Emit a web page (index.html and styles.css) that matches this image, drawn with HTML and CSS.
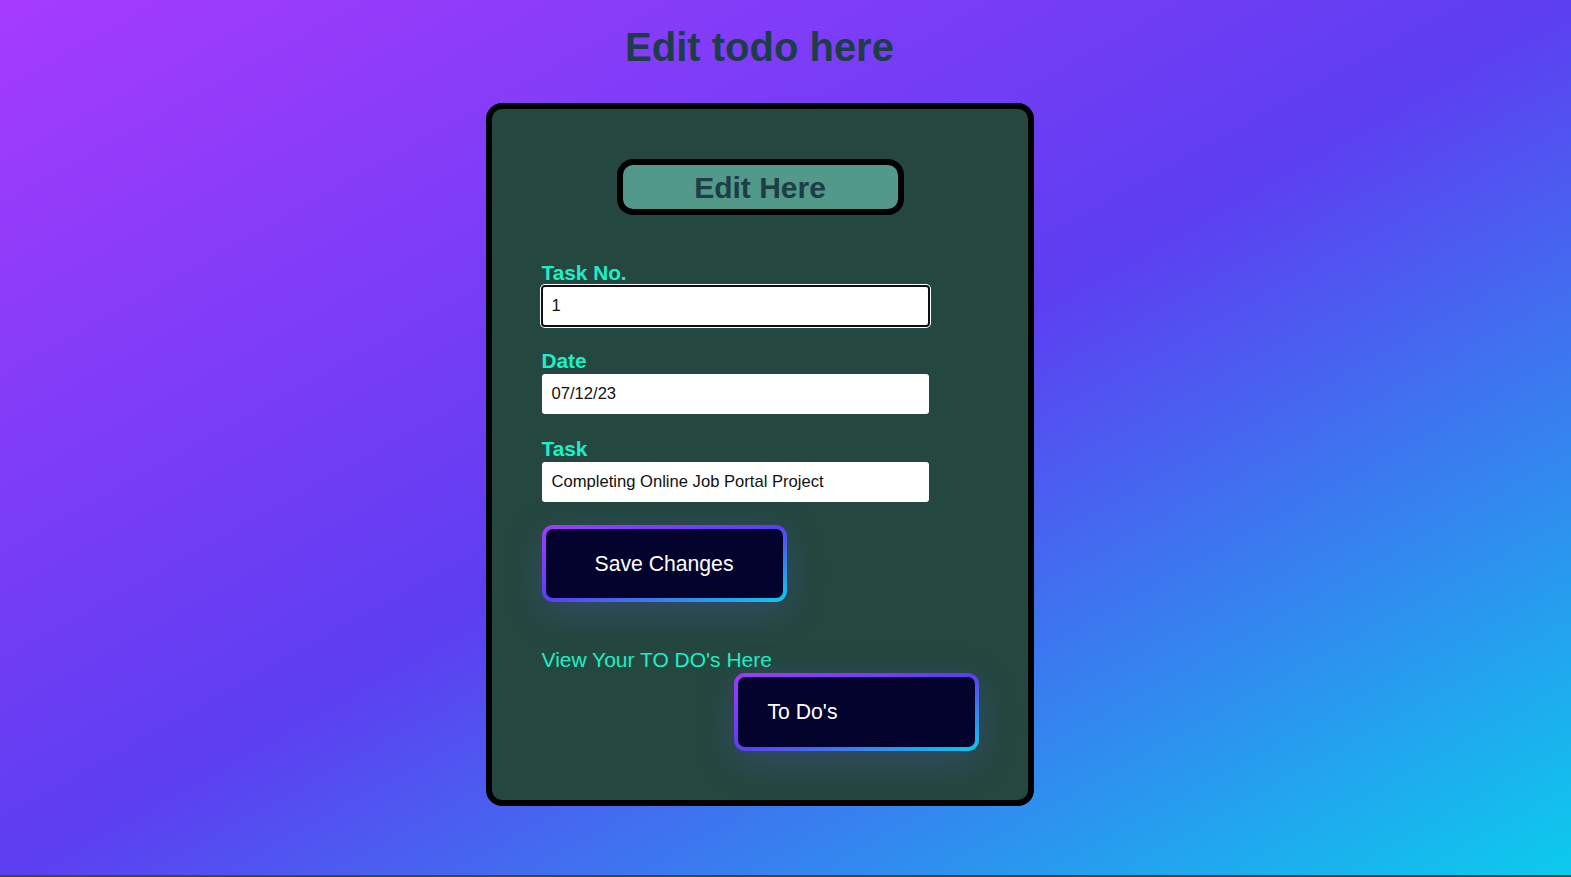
FILE: index.html
```html
<!DOCTYPE html>
<html lang="en">
<head>
<meta charset="utf-8">
<title>Edit todo</title>
<link rel="stylesheet" href="styles.css">
</head>
<body>
<div class="page">
  <h1 class="page-title">Edit todo here</h1>
  <div class="card">
    <div class="pill">Edit Here</div>
    <form class="edit-form">
      <div class="field">
        <label class="field-label" for="sno">Task No.</label>
        <input class="field-input is-focused" id="sno" type="text" value="1">
      </div>
      <div class="field">
        <label class="field-label" for="date">Date</label>
        <input class="field-input" id="date" type="text" value="07/12/23">
      </div>
      <div class="field">
        <label class="field-label" for="task">Task</label>
        <input class="field-input" id="task" type="text" value="Completing Online Job Portal Project">
      </div>
      <button class="glow-btn save-btn" type="button">Save Changes</button>
    </form>
    <a class="view-link" href="#">View Your TO DO's Here</a>
    <button class="glow-btn todo-btn" type="button">To Do's</button>
  </div>
</div>
</body>
</html>
```

FILE: styles.css
```css
html {
  background: #444444;
}

body {
  margin: 0;
  height: 875px;
  background: linear-gradient(to bottom right, #a63bfd 0%, #5d3ef1 50%, #0ccbed 100%);
  font-family: "Liberation Sans", Arial, sans-serif;
}

.page {
  padding-right: 52px;
  padding-top: 24px;
}

.page-title {
  margin: 0;
  text-align: center;
  font-size: 40px;
  line-height: 46px;
  font-weight: 700;
  color: #1d3d47;
}

.card {
  box-sizing: border-box;
  width: 548px;
  margin: 33px auto 0;
  border: 6px solid #000;
  border-radius: 16px;
  background: #24473f;
  padding: 50px 49px 49px 50px;
  display: flex;
  flex-direction: column;
}

.pill {
  box-sizing: border-box;
  align-self: center;
  width: 287px;
  height: 56px;
  border: 6px solid #000;
  border-radius: 16px;
  background: #52998a;
  color: #1d3d47;
  font-size: 30px;
  font-weight: 700;
  line-height: 45px;
  text-align: center;
}

.edit-form {
  margin-top: 46px;
  display: flex;
  flex-direction: column;
}

.field {
  display: flex;
  flex-direction: column;
  margin-bottom: 23px;
}

.field-label {
  font-size: 20.8px;
  line-height: 23px;
  font-weight: 700;
  color: #1cefc6;
}

.field-input {
  box-sizing: border-box;
  margin-top: 2px;
  width: 387px;
  height: 40px;
  border: none;
  border-radius: 3px;
  background: #fff;
  padding: 0 10px;
  font-family: "Liberation Sans", Arial, sans-serif;
  font-size: 16.6px;
  color: #111;
}

.field-input.is-focused {
  outline: 2px solid #101010;
  outline-offset: -1px;
  box-shadow: 0 0 0 2px #fff;
}

.glow-btn {
  box-sizing: border-box;
  width: 245px;
  height: 77px;
  border: 4px solid transparent;
  border-radius: 11px;
  background:
    linear-gradient(#03032e, #03032e) padding-box,
    linear-gradient(to bottom right, #a33bfb 0%, #5d3ef1 50%, #0ccbed 100%) border-box;
  box-shadow: 0 10px 36px rgba(95, 90, 210, 0.28);
  color: #fff;
  font-family: "Liberation Sans", Arial, sans-serif;
  font-size: 21.2px;
  cursor: pointer;
}

.save-btn {
  text-align: center;
}

.view-link {
  margin-top: 46px;
  font-size: 21px;
  line-height: 24px;
  color: #1cefc6;
  text-decoration: none;
}

.todo-btn {
  align-self: flex-end;
  margin-top: 1px;
  height: 78px;
  text-align: left;
  padding: 0 0 0 30px;
}
```
